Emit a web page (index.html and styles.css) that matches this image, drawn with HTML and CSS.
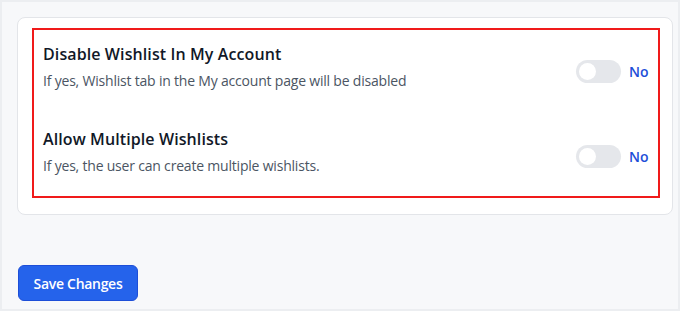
FILE: index.html
```html
<!DOCTYPE html>
<html lang="en">
<head>
<meta charset="utf-8">
<title>Wishlist settings</title>
<link rel="stylesheet" href="styles.css">
</head>
<body>
<div class="frame">
  <div class="card">
    <div class="highlight">
      <div class="row">
        <div class="text">
          <div class="title">Disable Wishlist In My Account</div>
          <div class="desc">If yes, Wishlist tab in the My account page will be disabled</div>
        </div>
        <div class="control">
          <span class="toggle"><span class="knob"></span></span>
          <span class="state">No</span>
        </div>
      </div>
      <div class="row">
        <div class="text">
          <div class="title">Allow Multiple Wishlists</div>
          <div class="desc">If yes, the user can create multiple wishlists.</div>
        </div>
        <div class="control">
          <span class="toggle"><span class="knob"></span></span>
          <span class="state">No</span>
        </div>
      </div>
    </div>
  </div>
  <button class="save" type="button">Save Changes</button>
</div>
</body>
</html>
```
FILE: styles.css
```css
* { box-sizing: border-box; }
html, body { margin: 0; padding: 0; }
body {
  font-family: "Open Sans", "Noto Sans", sans-serif;
  background: #f7f8fa;
}
.frame {
  height: 311px;
  border: 2px solid #eceef1;
  padding: 15px 5px 0 15px;
  background: #f7f8fa;
}
.card {
  background: #fff;
  border: 1px solid #e3e5e9;
  border-radius: 8px;
  padding: 10px 12px 16px 14px;
}
.highlight {
  border: 2px solid #f01a1a;
  padding: 12px 10px 19px 9px;
  display: flex;
  flex-direction: column;
  gap: 35px;
}
.row {
  display: flex;
  align-items: center;
  justify-content: space-between;
}
.title {
  font-size: 16px;
  font-weight: 600;
  color: #111827;
  line-height: 24px;
  letter-spacing: 0.1px;
}
.desc {
  margin-top: 4px;
  font-size: 14px;
  color: #4b5563;
  line-height: 22px;
  letter-spacing: -0.2px;
}
.control {
  display: flex;
  align-items: center;
  gap: 8px;
  margin-top: 8px;
}
.toggle {
  width: 45px;
  height: 23px;
  border-radius: 12px;
  background: #e5e7eb;
  display: flex;
  align-items: center;
  padding-left: 3px;
}
.knob {
  width: 17px;
  height: 17px;
  border-radius: 50%;
  background: #fff;
}
.state {
  font-size: 14px;
  font-weight: 600;
  color: #1d4ed8;
  width: 19px;
}
.save {
  margin-top: 50px;
  width: 120px;
  height: 36px;
  margin-left: 1px;
  background: #2563eb;
  border: 1px solid #1d4ed8;
  border-radius: 6px;
  color: #fff;
  font-family: "Open Sans", "Noto Sans", sans-serif;
  font-size: 14px;
  font-weight: 600;
  letter-spacing: -0.3px;
  padding: 0;
}
```
